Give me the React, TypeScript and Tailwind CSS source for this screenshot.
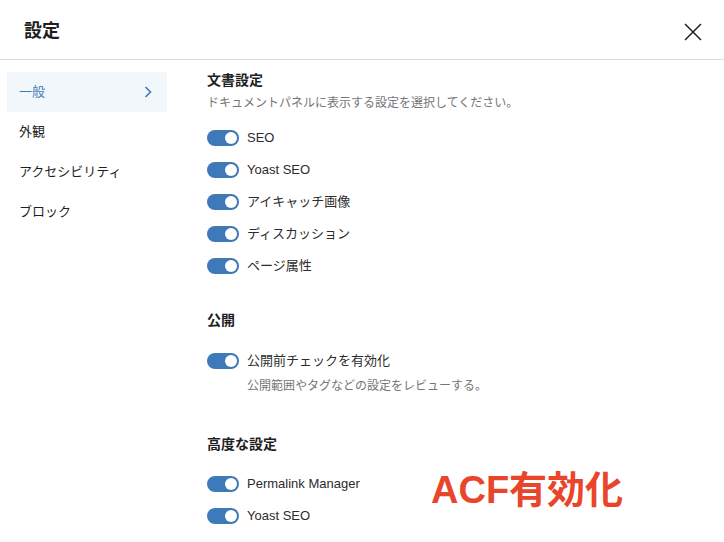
import { useState } from "react"

const font = "font-['Liberation_Sans','Noto_Sans_CJK_JP',sans-serif]"

function Toggle({ label, hint }: { label: string; hint?: string }) {
  const [on, setOn] = useState(true)
  return (
    <div>
      <div className="flex h-8 items-center">
        <button
          type="button"
          onClick={() => setOn(!on)}
          className={`relative h-4 w-8 rounded-full ${on ? "bg-[#3e7ab9]" : "bg-[#b5b5b5]"}`}
        >
          <span
            className={`absolute top-[2px] h-3 w-3 rounded-full bg-white ${on ? "right-[2px]" : "left-[2px]"}`}
          />
        </button>
        <span className="ml-2 text-[13px] text-[#2c2c2c]">{label}</span>
      </div>
      {hint && <p className="ml-10 mt-px text-[12px] leading-4 text-[#757575]">{hint}</p>}
    </div>
  )
}

export default function App() {
  const nav = ["一般", "外観", "アクセシビリティ", "ブロック"]

  return (
    <div className={`h-[542px] w-[724px] overflow-hidden bg-white ${font}`}>
      <header className="flex h-[60px] items-center justify-between border-b border-[#dcdcdc] pl-6 pr-[22px] pt-1">
        <h1 className="text-[18px] font-bold text-[#1e1e1e]">設定</h1>
        <button type="button" className="text-[#1e1e1e]">
          <svg width="18" height="18" viewBox="0 0 18 18" fill="none" stroke="currentColor" strokeWidth="1.5">
            <path d="M1 1l16 16M17 1L1 17" />
          </svg>
        </button>
      </header>

      <div className="flex">
        <nav className="w-[160px] shrink-0 ml-[7px] pt-3">
          {nav.map((item, i) => (
            <div
              key={item}
              className={`flex h-10 items-center justify-between px-3 text-[13px] ${
                i === 0 ? "bg-[#f2f7fb] text-[#3e7ab9]" : "text-[#1e1e1e]"
              }`}
            >
              <span>{item}</span>
              {i === 0 && (
                <svg width="8" height="12" viewBox="0 0 8 12" fill="none" stroke="#3e7ab9" strokeWidth="1.6" className="mr-[3px]">
                  <path d="M1.5 1l5 5-5 5" />
                </svg>
              )}
            </div>
          ))}
        </nav>

        <main className="relative ml-10 flex-1 pt-[10px]">
          <section>
            <h2 className="text-[14px] font-bold leading-5 text-[#1e1e1e]">文書設定</h2>
            <p className="mt-[5px] text-[12px] leading-4 text-[#757575]">
              ドキュメントパネルに表示する設定を選択してください。
            </p>
            <div className="mt-[11px]">
              <Toggle label="SEO" />
              <Toggle label="Yoast SEO" />
              <Toggle label="アイキャッチ画像" />
              <Toggle label="ディスカッション" />
              <Toggle label="ページ属性" />
            </div>
          </section>

          <section className="mt-[28px]">
            <h2 className="text-[14px] font-bold leading-5 text-[#1e1e1e]">公開</h2>
            <div className="mt-[15px]">
              <Toggle label="公開前チェックを有効化" hint="公開範囲やタグなどの設定をレビューする。" />
            </div>
          </section>

          <section className="mt-10">
            <h2 className="text-[14px] font-bold leading-5 text-[#1e1e1e]">高度な設定</h2>
            <div className="mt-[14px]">
              <Toggle label="Permalink Manager" />
              <Toggle label="Yoast SEO" />
            </div>
          </section>

          <div className="absolute left-[224px] top-[411px] text-[38px] font-bold leading-none text-[#e9452b]">
            ACF有効化
          </div>
        </main>
      </div>
    </div>
  )
}
